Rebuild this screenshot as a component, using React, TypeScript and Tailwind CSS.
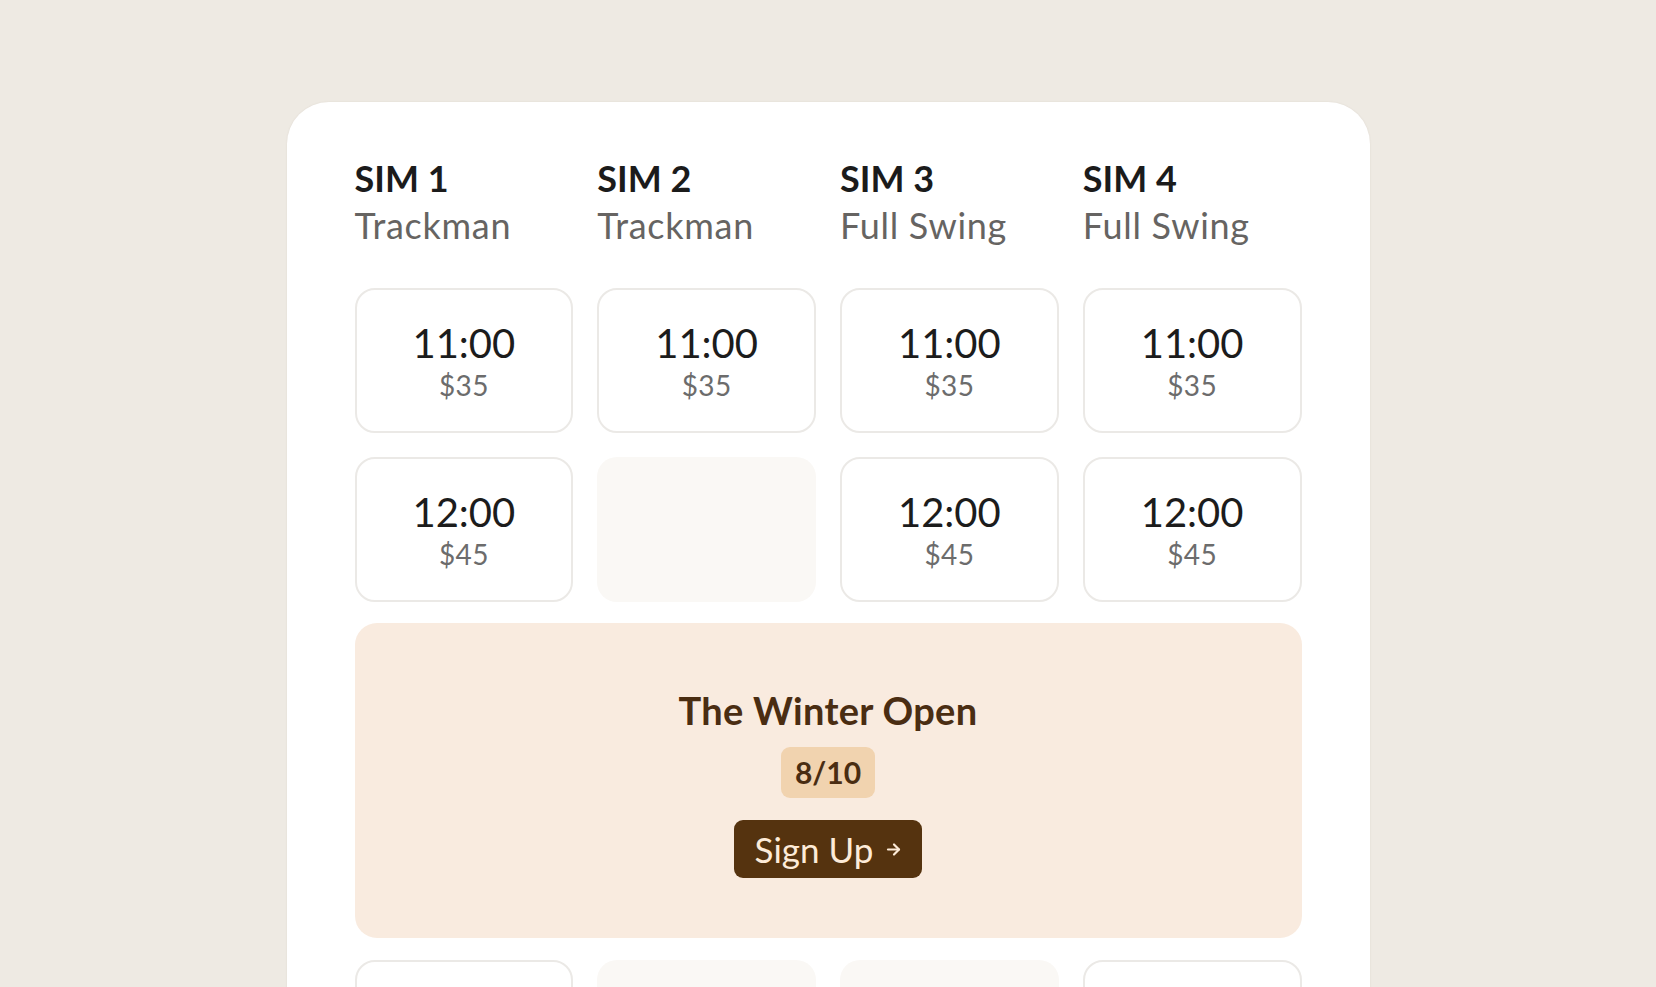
import React from "react";

type Slot = { t: string; p: string } | null;

const sims = [
  { name: "SIM 1", type: "Trackman" },
  { name: "SIM 2", type: "Trackman" },
  { name: "SIM 3", type: "Full Swing" },
  { name: "SIM 4", type: "Full Swing" },
];

const row1: Slot[] = [
  { t: "11:00", p: "$35" },
  { t: "11:00", p: "$35" },
  { t: "11:00", p: "$35" },
  { t: "11:00", p: "$35" },
];
const row2: Slot[] = [
  { t: "12:00", p: "$45" },
  null,
  { t: "12:00", p: "$45" },
  { t: "12:00", p: "$45" },
];

function SlotCell({ slot }: { slot: Slot }) {
  if (!slot) {
    return <div className="h-[145px] rounded-[20px] bg-[#faf8f5]" />;
  }
  return (
    <div className="flex h-[145px] flex-col items-center justify-center rounded-[20px] border-2 border-[#ebe9e6] bg-white">
      <div className="text-[40px] leading-[44px] text-[#1c1c1c]">{slot.t}</div>
      <div className="mt-[4px] text-[28px] leading-[32px] tracking-[0.3px] text-[#6c6c6c]">{slot.p}</div>
    </div>
  );
}

function Row({ slots }: { slots: Slot[] }) {
  return (
    <div className="grid grid-cols-4 gap-x-6">
      {slots.map((s, i) => (
        <SlotCell key={i} slot={s} />
      ))}
    </div>
  );
}

export default function App() {
  return (
    <div className="min-h-screen bg-[#eeeae3] pt-[102px] font-['Lato',sans-serif]">
      <div className="mx-auto w-[1083px] rounded-[42px] bg-white px-[68px] pt-[53px] pb-[60px] shadow-[0_0_2px_rgba(120,100,80,0.12)]">
        <div className="grid grid-cols-4 gap-x-6">
          {sims.map((s) => (
            <div key={s.name} className="flex flex-col">
              <div className="text-[36px] font-bold leading-[47px] text-[#1b1b1b]">{s.name}</div>
              <div className="text-[36px] leading-[47px] tracking-[0.7px] text-[#666462]">{s.type}</div>
            </div>
          ))}
        </div>

        <div className="mt-[39px] flex flex-col gap-6">
          <Row slots={row1} />
          <Row slots={row2} />
        </div>

        <div className="mt-[21px] flex flex-col items-center rounded-[22px] bg-[#f9ebdf] pt-[65px] pb-[60px]">
          <div className="text-[38px] font-bold leading-[45px] tracking-[0.3px] text-[#4a2d12]">The Winter Open</div>
          <div className="mt-[14px] flex h-[51px] items-center rounded-[9px] bg-[#f1d3af] px-[14px] text-[30px] font-bold text-[#4a2d12]">
            8/10
          </div>
          <button className="mt-[22px] flex h-[58px] items-center gap-[13px] rounded-[9px] bg-[#55330f] px-[21px] text-[35px] text-[#fdebd8]">
            <span>Sign Up</span>
            <svg width="15" height="15" viewBox="0 0 15 15" fill="none" stroke="#fdebd8" strokeWidth="2.2" strokeLinecap="round" strokeLinejoin="round">
              <path d="M2 7.5h11" />
              <path d="M8 2.5l5 5-5 5" />
            </svg>
          </button>
        </div>

        <div className="mt-[22px] grid grid-cols-4 gap-x-6">
          <div className="h-[145px] rounded-[20px] border-2 border-[#ebe9e6] bg-white" />
          <div className="h-[145px] rounded-[20px] bg-[#faf8f5]" />
          <div className="h-[145px] rounded-[20px] bg-[#faf8f5]" />
          <div className="h-[145px] rounded-[20px] border-2 border-[#ebe9e6] bg-white" />
        </div>
      </div>
    </div>
  );
}
